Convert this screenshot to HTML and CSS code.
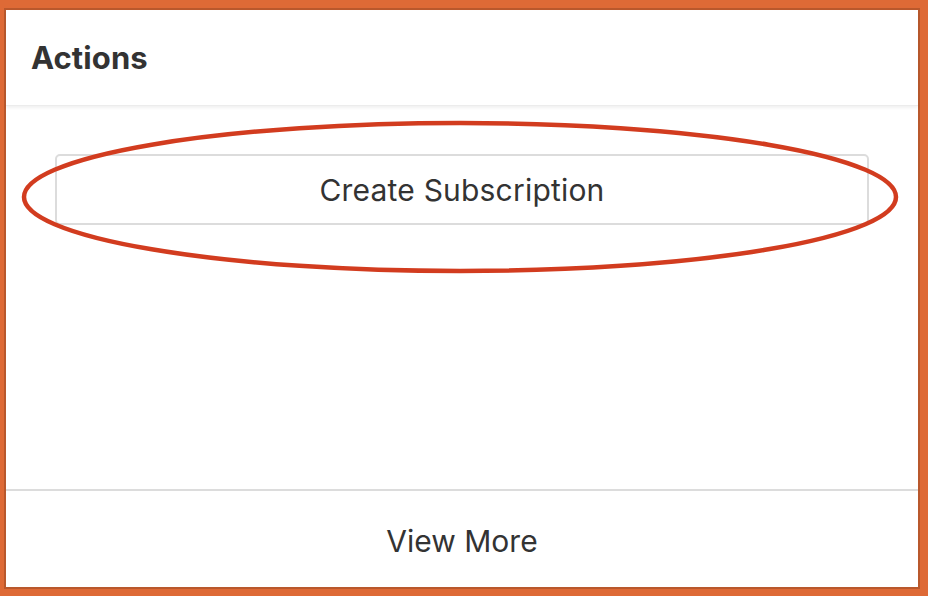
FILE: index.html
```html
<!DOCTYPE html>
<html>
<head>
<meta charset="utf-8">
<link rel="stylesheet" href="styles.css">
</head>
<body>
<div class="frame">
  <div class="card">
    <div class="card-header"><h2 class="title">Actions</h2></div>
    <div class="card-body">
      <button class="action-btn">Create Subscription</button>
    </div>
    <div class="card-footer">View More</div>
  </div>
  <svg class="annotation" width="928" height="596" viewBox="0 0 928 596">
    <ellipse cx="460" cy="197" rx="436" ry="74" fill="none" stroke="#d23c1f" stroke-width="4.5"/>
  </svg>
</div>
</body>
</html>
```

FILE: styles.css
```css
html, body {
  margin: 0;
  padding: 0;
  background: #de6a36;
}
.frame {
  position: relative;
  width: 928px;
  height: 596px;
  box-sizing: border-box;
  padding: 8px 8px 7px 4px;
  font-family: Inter, "Liberation Sans", sans-serif;
  color: #333;
}
.card {
  box-sizing: border-box;
  height: 100%;
  border: 2px solid #b9582c;
  background: #fff;
  display: flex;
  flex-direction: column;
}
.card-header {
  height: 96px;
  flex: none;
  display: flex;
  align-items: center;
  padding-left: 25px;
  box-shadow: 0 2px 3px rgba(0,0,0,0.06);
  border-bottom: 1px solid #ececec;
  box-sizing: border-box;
  position: relative;
  z-index: 1;
}
.title {
  margin: 0;
  font-size: 31px;
  font-weight: 700;
  color: #333;
  letter-spacing: 0.1px;
}
.card-body {
  flex: 1;
  padding: 48px 49px 0;
}
.action-btn {
  display: block;
  width: 100%;
  height: 71px;
  box-sizing: border-box;
  border: 2px solid #dcdcdc;
  border-radius: 5px;
  background: #fff;
  font-family: Inter, "Liberation Sans", sans-serif;
  font-size: 30px;
  letter-spacing: 0.2px;
  padding-top: 2px;
  color: #333;
}
.card-footer {
  height: 98px;
  flex: none;
  box-sizing: border-box;
  padding-top: 4px;
  border-top: 2px solid #dcdcdc;
  display: flex;
  align-items: center;
  justify-content: center;
  font-size: 30px;
  color: #333;
}
.annotation {
  position: absolute;
  left: 0;
  top: 0;
  pointer-events: none;
}
```
